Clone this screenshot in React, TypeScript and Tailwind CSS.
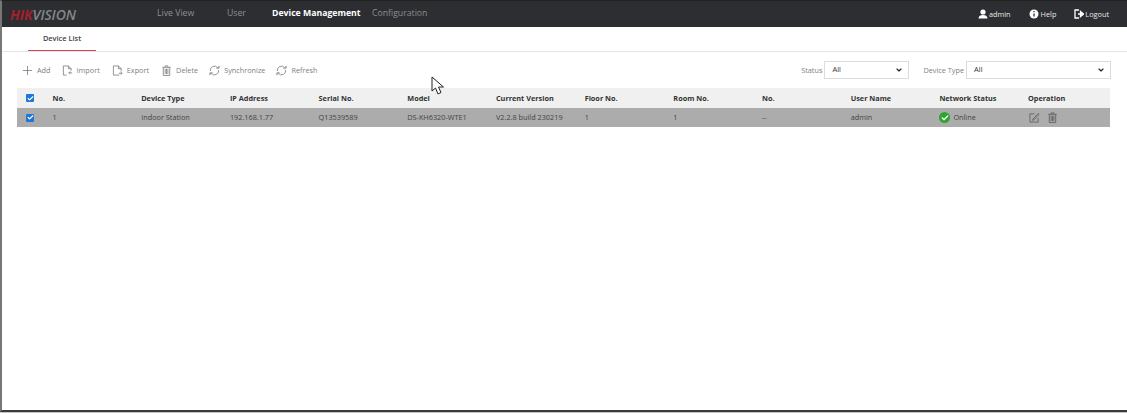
import { Check, ChevronDown } from "lucide-react";
import type { ReactNode } from "react";

const columns = ["No.", "Device Type", "IP Address", "Serial No.", "Model", "Current Version", "Floor No.", "Room No.", "No.", "User Name", "Network Status", "Operation"];
const cells = ["1", "Indoor Station", "192.168.1.77", "Q13539589", "DS-KH6320-WTE1", "V2.2.8 build 230219", "1", "1", "--", "admin"];

function Glyph({ children, size = 11 }: { children: ReactNode; size?: number }) {
  return (
    <svg width={size} height={size} viewBox="0 0 12 12" fill="none" stroke="currentColor" strokeWidth="0.9" className="shrink-0">
      {children}
    </svg>
  );
}

const PlusIcon = () => <Glyph><path d="M6 1v10M1 6h10" /></Glyph>;
const ImportIcon = () => (
  <Glyph>
    <path d="M5 11H1.500V1H7l3 3v2" />
    <path d="M7 1v3h3" />
    <path d="M11 8.500H7.500M9 7 7.500 8.500 9 10" />
  </Glyph>
);
const ExportIcon = () => (
  <Glyph>
    <path d="M8 11H1.500V1H7l3 3v3" />
    <path d="M7 1v3h3" />
    <path d="M7.500 9H11M9.500 7.500 11 9 9.500 10.500" />
  </Glyph>
);
const TrashIcon = () => (
  <Glyph>
    <path d="M1.500 2.500h9M4.500 2.500V1h3v1.500" />
    <path d="M2.500 2.500v9h7v-9" />
    <path d="M4.500 4v6M6 4v6M7.500 4v6" />
  </Glyph>
);
const SyncIcon = () => (
  <Glyph>
    <path d="M1.500 6.500A4.500 4.500 0 0 1 9.500 3L11 1.500" />
    <path d="M8 3.500h3V1" />
    <path d="M10.500 5.500A4.500 4.500 0 0 1 2.500 9L1 10.500" />
    <path d="M4 8.500H1V11" />
  </Glyph>
);
const EditIcon = () => (
  <Glyph>
    <path d="M10 6.500V11H1V2h5" />
    <path d="M4.500 7.500 10 1.500l1 1-5.500 6-1.800.6z" />
  </Glyph>
);

const tools = [
  { label: "Add", icon: <PlusIcon />, gap: "gap-[4px] mr-[11px]" },
  { label: "Import", icon: <ImportIcon />, gap: "gap-[4px] mr-[12px]" },
  { label: "Export", icon: <ExportIcon />, gap: "gap-[4px] mr-[12px]" },
  { label: "Delete", icon: <TrashIcon />, gap: "gap-[4px] mr-[11px]" },
  { label: "Synchronize", icon: <SyncIcon />, gap: "gap-[4px] mr-[11px]" },
  { label: "Refresh", icon: <SyncIcon />, gap: "gap-[4px]" },
];

function Box() {
  return (
    <span className="flex h-[8px] w-[8px] items-center justify-center rounded-[1px] bg-[#1e78d8]">
      <Check className="h-[7px] w-[7px] text-white" strokeWidth={4} />
    </span>
  );
}

function Select({ width }: { width: string }) {
  return (
    <div className={`flex h-[18px] items-center justify-between border border-[#dcdcdc] bg-white pl-[7px] pr-[5px] text-[7.5px] text-[#333] ${width}`}>
      <span>All</span>
      <ChevronDown className="h-[8px] w-[8px] text-[#222]" strokeWidth={3.5} />
    </div>
  );
}

export default function App() {
  return (
    <div className="h-[413px] w-[1127px] overflow-hidden border-b border-b-[#c4c4c4] bg-white">
      <div className="relative flex h-[412px] flex-col border-b-2 border-l-2 border-t border-b-[#3a3a3a] border-l-[#777] border-t-[#222] font-['Open_Sans',sans-serif] text-[7.3px] text-[#555]">
        <header className="flex h-[26px] shrink-0 items-center bg-[#2c2e31] text-[#8d8f92]">
          <span className="ml-[8px] w-[147px] text-[14px] font-bold italic tracking-[-0.1px]">
            <span className="text-[#a3212c]">HIK</span>
            <span className="font-semibold text-[#85878a]">VISION</span>
          </span>
          <nav className="flex items-center text-[8.7px]">
            <span className="w-[70px]">Live View</span>
            <span className="w-[45px]">User</span>
            <span className="w-[100px] text-[8.7px] font-bold text-white">Device Management</span>
            <span>Configuration</span>
          </nav>
          <div className="ml-auto mr-[18px] flex items-center text-[7.3px] text-[#e8e8e8]">
            <svg width="10" height="10" viewBox="0 0 10 10" className="mr-[1px]">
              <circle cx="5" cy="3" r="2.600" fill="white" />
              <path d="M0.500 9.500c0-2.500 2-3.500 4.500-3.500s4.500 1 4.500 3.500z" fill="white" />
            </svg>
            <span className="mr-[18px]">admin</span>
            <svg width="10" height="10" viewBox="0 0 10 10" className="mr-[2px]">
              <circle cx="5" cy="5" r="4.500" fill="white" />
              <path d="M5 4.500v3M5 2v1.300" stroke="#2c2e31" strokeWidth="1.300" />
            </svg>
            <span className="mr-[18px]">Help</span>
            <svg width="10" height="10" viewBox="0 0 10 10" className="mr-[1px]" fill="none">
              <path d="M5 1H1v8h4" stroke="white" strokeWidth="1.300" />
              <path d="M4 5h3.500M6.500 2.500 9.500 5l-3 2.500z" stroke="white" strokeWidth="1.300" fill="white" />
            </svg>
            <span>Logout</span>
          </div>
        </header>

        <div className="flex h-[25px] shrink-0 border-b border-[#e6e6e6] pl-[26px]">
          <div className="flex h-[24px] w-[68px] items-center justify-center border-b border-[#d8474b] text-[7.4px] font-semibold text-[#444]">
            Device List
          </div>
        </div>

        <div className="mt-[8px] flex h-[20px] shrink-0 items-center pl-[20px] pr-[15px] text-[#808080]">
          {tools.map(({ label, icon, gap }) => (
            <span key={label} className={`flex items-center ${gap}`}>
              {icon}
              {label}
            </span>
          ))}
          <div className="ml-auto mr-[1px] flex items-center">
            <span className="mr-[2px]">Status</span>
            <div className="mr-[14px]"><Select width="w-[85px]" /></div>
            <span className="mr-[2px]">Device Type</span>
            <Select width="w-[145px]" />
          </div>
        </div>

        <div className="ml-[15px] mr-[15px] mt-[8px] w-[1093px]">
          <div className="grid h-[20px] grid-cols-[35.500px_repeat(11,88.700px)_1fr] items-center bg-[#f0f0f0] font-bold text-[#333]">
            <span className="pl-[9px]"><Box /></span>
            {columns.map((c, i) => <span key={i}>{c}</span>)}
          </div>
          <div className="grid h-[19px] grid-cols-[35.500px_repeat(11,88.700px)_1fr] items-center bg-[#acacac] text-[#444]">
            <span className="pl-[9px]"><Box /></span>
            {cells.map((c, i) => <span key={i}>{c}</span>)}
            <span className="flex items-center gap-[3px]">
              <span className="flex h-[11px] w-[11px] items-center justify-center rounded-full bg-[#2ea52e]">
                <Check className="h-[8px] w-[8px] text-white" strokeWidth={4} />
              </span>
              Online
            </span>
            <span className="flex items-center gap-[7px] pl-[1px] text-[#5c5c5c]">
              <EditIcon />
              <TrashIcon />
            </span>
          </div>
        </div>

        <svg className="absolute left-[429px] top-[75px]" width="14" height="20" viewBox="0 0 14 20">
          <path d="M1 1 L1 15 L4.500 12 L7 18 L10 16.500 L7.500 11 L12.500 11 Z" fill="white" stroke="#222" strokeWidth="1" />
        </svg>
      </div>
    </div>
  );
}
